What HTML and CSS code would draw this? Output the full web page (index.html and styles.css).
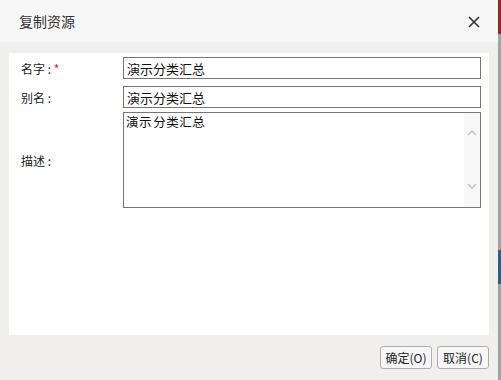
FILE: index.html
```html
<!DOCTYPE html>
<html>
<head>
  <title>复制资源</title>
  <link rel="stylesheet" href="styles.css">
</head>
<body>
  <div class="screen">
    <div class="dialog">
      <div class="dialog-header">
        <span class="dialog-title">复制资源</span>
        <span class="dialog-close">
          <svg width="12" height="12" viewBox="0 0 12 12">
            <path d="M1 1L11 11M11 1L1 11" stroke="#333" stroke-width="1.6" fill="none"/>
          </svg>
        </span>
      </div>

      <div class="dialog-body">
        <div class="panel">
          <div class="form-grid">
            <label class="field-label">名字 : <span class="required">*</span></label>
            <input type="text" class="input-field" value="演示分类汇总">

            <label class="field-label row-alias">别名 :</label>
            <input type="text" class="input-field row-alias" value="演示分类汇总">

            <label class="field-label">描述 :</label>
            <div class="textarea-box">
              <div class="textarea-text">演示 分类汇总</div>
              <div class="scrollbar">
                <svg width="10" height="7" viewBox="0 0 10 7">
                  <path d="M1 6L5 2L9 6" stroke="#c3c3c3" stroke-width="1.5" fill="none"/>
                </svg>
                <svg width="10" height="7" viewBox="0 0 10 7">
                  <path d="M1 1L5 5L9 1" stroke="#c3c3c3" stroke-width="1.5" fill="none"/>
                </svg>
              </div>
            </div>
          </div>
        </div>

        <div class="dialog-footer">
          <button class="button">确定(O)</button>
          <button class="button">取消(C)</button>
        </div>
      </div>
    </div>

    <div class="page-edge">
      <div class="edge-red"></div>
      <div class="edge-gray"></div>
      <div class="edge-blue"></div>
      <div class="edge-gray edge-fill"></div>
    </div>
  </div>
</body>
</html>
```

FILE: styles.css
```css
html, body {
  margin: 0;
  padding: 0;
  height: 100%;
}

body {
  font-family: "Noto Sans CJK SC", "Noto Sans", sans-serif;
  font-size: 12px;
  color: #222;
  background-color: #f0efee;
}

.screen {
  display: flex;
  height: 380px;
  width: 501px;
}

.dialog {
  width: 498px;
  display: flex;
  flex-direction: column;
  background-color: #f0efee;
}

.dialog-header {
  height: 42px;
  background-color: #f7f7f7;
  display: flex;
  align-items: center;
  justify-content: space-between;
  padding: 0 19px 0 19px;
}

.dialog-title {
  font-size: 14px;
  color: #333;
  margin-top: -1px;
}

.dialog-close {
  display: flex;
  margin-right: -1px;
  margin-top: 2px;
}

.dialog-body {
  flex: 1;
  padding: 11px 9px 0 9px;
}

.panel {
  background-color: #fff;
  height: 278px;
  padding: 4px 8px 0 12px;
}

.form-grid {
  display: grid;
  grid-template-columns: 102px 358px;
  row-gap: 7px;
  align-items: center;
}

.field-label {
  color: #222;
  font-size: 12px;
}

.required {
  color: #e02020;
}

.input-field {
  box-sizing: border-box;
  height: 22px;
  width: 358px;
  margin: 0;
  padding: 0 3px;
  border: 1px solid #767676;
  border-radius: 0;
  font-family: "Noto Sans CJK SC", sans-serif;
  font-size: 13px;
  color: #111;
  outline: none;
}

.row-alias {
  margin-bottom: -3px;
}

.textarea-box {
  box-sizing: border-box;
  height: 96px;
  border: 1px solid #767676;
  display: flex;
}

.textarea-text {
  flex: 1;
  padding: 0 2px;
  font-size: 12.5px;
  line-height: 18px;
  letter-spacing: 0.5px;
  word-spacing: -2px;
  color: #111;
}

.scrollbar {
  width: 16px;
  background-color: #f8f8f8;
  display: flex;
  flex-direction: column;
  align-items: center;
  justify-content: space-between;
  padding: 16px 0 17px 0;
}

.dialog-footer {
  display: flex;
  justify-content: flex-end;
  gap: 5px;
  padding-top: 11px;
}

.button {
  box-sizing: border-box;
  width: 52px;
  height: 23px;
  padding: 0;
  background-color: #f6f6f6;
  border: 1px solid #adadad;
  border-radius: 3px;
  font-family: "Noto Sans CJK SC", sans-serif;
  font-size: 12px;
  color: #222;
}

.page-edge {
  width: 3px;
  display: flex;
  flex-direction: column;
}

.edge-red {
  height: 34px;
  background-color: #8e2b22;
}

.edge-gray {
  height: 216px;
  background-color: #a3a3a3;
}

.edge-blue {
  height: 34px;
  background-color: #2e5e86;
}

.edge-fill {
  flex: 1;
}
```
